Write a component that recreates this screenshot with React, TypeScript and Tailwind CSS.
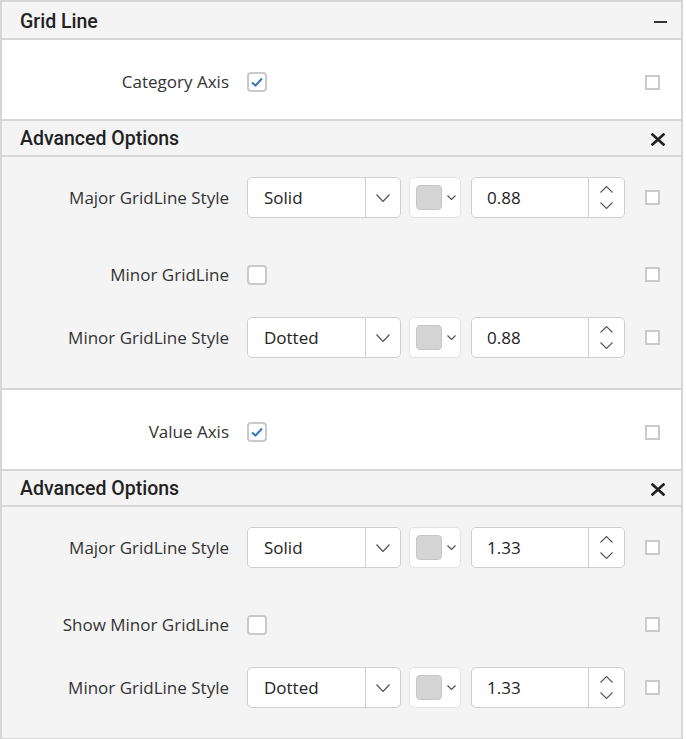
import React from "react";

const labelFont = { fontFamily: '"Open Sans", "Noto Sans", sans-serif' };
const headFont = { fontFamily: 'Roboto, "Noto Sans", sans-serif' };

function Chevron({ w = 14, h = 8, className = "" }: { w?: number; h?: number; className?: string }) {
  return (
    <svg width={w} height={h} viewBox={`0 0 ${w} ${h}`} className={className}>
      <polyline points={`0.5,0.5 ${w / 2},${h - 0.5} ${w - 0.5},0.5`} fill="none" stroke="#555" strokeWidth="1.2" />
    </svg>
  );
}

function SmallBox() {
  return <div className="w-[15px] h-[15px] border-2 border-[#cacaca] bg-white shrink-0" />;
}

function Check({ checked }: { checked: boolean }) {
  return (
    <div className="w-[20px] h-[20px] rounded-[4px] border-2 border-[#c9c9c9] bg-white flex items-center justify-center">
      {checked && (
        <svg width="12" height="10" viewBox="0 0 12 10">
          <polyline points="1,5.5 4.5,8.5 11,1.5" fill="none" stroke="#3a79c1" strokeWidth="2" />
        </svg>
      )}
    </div>
  );
}

function Label({ text }: { text: string }) {
  return (
    <div className="w-[227px] shrink-0 text-right text-[17px] text-[#333]" style={labelFont}>
      {text}
    </div>
  );
}

function StyleRow({ label, value, num }: { label: string; value: string; num: string }) {
  return (
    <div className="flex items-center h-[41px]">
      <Label text={label} />
      <div className="ml-[18px] w-[154px] h-[41px] bg-white border-[1.5px] border-[#cfcfcf] rounded-[5px] flex">
        <div className="flex-1 flex items-center pl-[16px] text-[17px] text-[#222]" style={labelFont}>
          {value}
        </div>
        <div className="w-[35px] border-l-[1.5px] border-[#cfcfcf] flex items-center justify-center">
          <Chevron />
        </div>
      </div>
      <div className="ml-[8px] w-[52px] h-[41px] bg-white border-[1.5px] border-[#e2e2e2] rounded-[5px] flex items-center pl-[6px]">
        <div className="w-[26px] h-[25px] bg-[#d4d4d4] border border-[#c6c6c6] rounded-[4px]" />
        <Chevron w={9} h={5} className="ml-[5px]" />
      </div>
      <div className="ml-[10px] w-[154px] h-[41px] bg-white border-[1.5px] border-[#cfcfcf] rounded-[5px] flex">
        <div className="flex-1 flex items-center pl-[15px] text-[17px] text-[#222]" style={labelFont}>
          {num}
        </div>
        <div className="w-[36px] border-l-[1.5px] border-[#cfcfcf] flex flex-col items-center justify-center gap-[9px]">
          <svg width="13" height="7" viewBox="0 0 13 7">
            <polyline points="0.5,6.5 6.5,0.5 12.5,6.5" fill="none" stroke="#555" strokeWidth="1.1" />
          </svg>
          <svg width="13" height="7" viewBox="0 0 13 7">
            <polyline points="0.5,0.5 6.5,6.5 12.5,0.5" fill="none" stroke="#555" strokeWidth="1.1" />
          </svg>
        </div>
      </div>
      <div className="ml-auto mr-[21px]">
        <SmallBox />
      </div>
    </div>
  );
}

function CheckRow({ label, checked }: { label: string; checked: boolean }) {
  return (
    <div className="flex items-center h-[41px]">
      <Label text={label} />
      <div className="ml-[18px]">
        <Check checked={checked} />
      </div>
      <div className="ml-auto mr-[21px]">
        <SmallBox />
      </div>
    </div>
  );
}

function AdvHeader() {
  return (
    <div className="h-[36px] bg-[#f4f4f4] border-b-2 border-[#d6d6d6] flex items-center justify-between pl-[18px] pr-[16px] pt-[2px]">
      <span className="text-[19.5px] font-medium text-[#222]" style={headFont}>
        Advanced Options
      </span>
      <svg width="14" height="13" viewBox="0 0 14 13">
        <path d="M1.5 1.5 L12.5 11.5 M12.5 1.5 L1.5 11.5" stroke="#222" strokeWidth="2.6" strokeLinecap="square" />
      </svg>
    </div>
  );
}

function AdvBody({ checkLabel, num }: { checkLabel: string; num: string }) {
  return (
    <div className="bg-[#f4f4f4] border-b-2 border-[#d6d6d6] pt-[20px] pb-[30px]">
      <StyleRow label="Major GridLine Style" value="Solid" num={num} />
      <div className="mt-[36px]">
        <CheckRow label={checkLabel} checked={false} />
      </div>
      <div className="mt-[22px]">
        <StyleRow label="Minor GridLine Style" value="Dotted" num={num} />
      </div>
    </div>
  );
}

function AxisRow({ label }: { label: string }) {
  return (
    <div className="h-[81px] bg-white border-b-2 border-[#d6d6d6] flex flex-col justify-center pt-[5px]">
      <CheckRow label={label} checked={true} />
    </div>
  );
}

export default function App() {
  return (
    <div className="w-[686px] h-[739px] bg-white overflow-hidden">
      <div className="w-[683px] border-t-2 border-x-2 border-[#d6d6d6]">
        <div className="h-[38px] bg-[#f4f4f4] border-b-2 border-[#d6d6d6] flex items-center justify-between pl-[18px] pr-[14px] pt-[3px]">
          <span className="text-[19.5px] font-medium text-[#222]" style={headFont}>
            Grid Line
          </span>
          <div className="w-[13px] h-[2px] bg-[#333]" />
        </div>
        <AxisRow label="Category Axis" />
        <AdvHeader />
        <AdvBody checkLabel="Minor GridLine" num="0.88" />
        <AxisRow label="Value Axis" />
        <AdvHeader />
        <AdvBody checkLabel="Show Minor GridLine" num="1.33" />
      </div>
    </div>
  );
}
